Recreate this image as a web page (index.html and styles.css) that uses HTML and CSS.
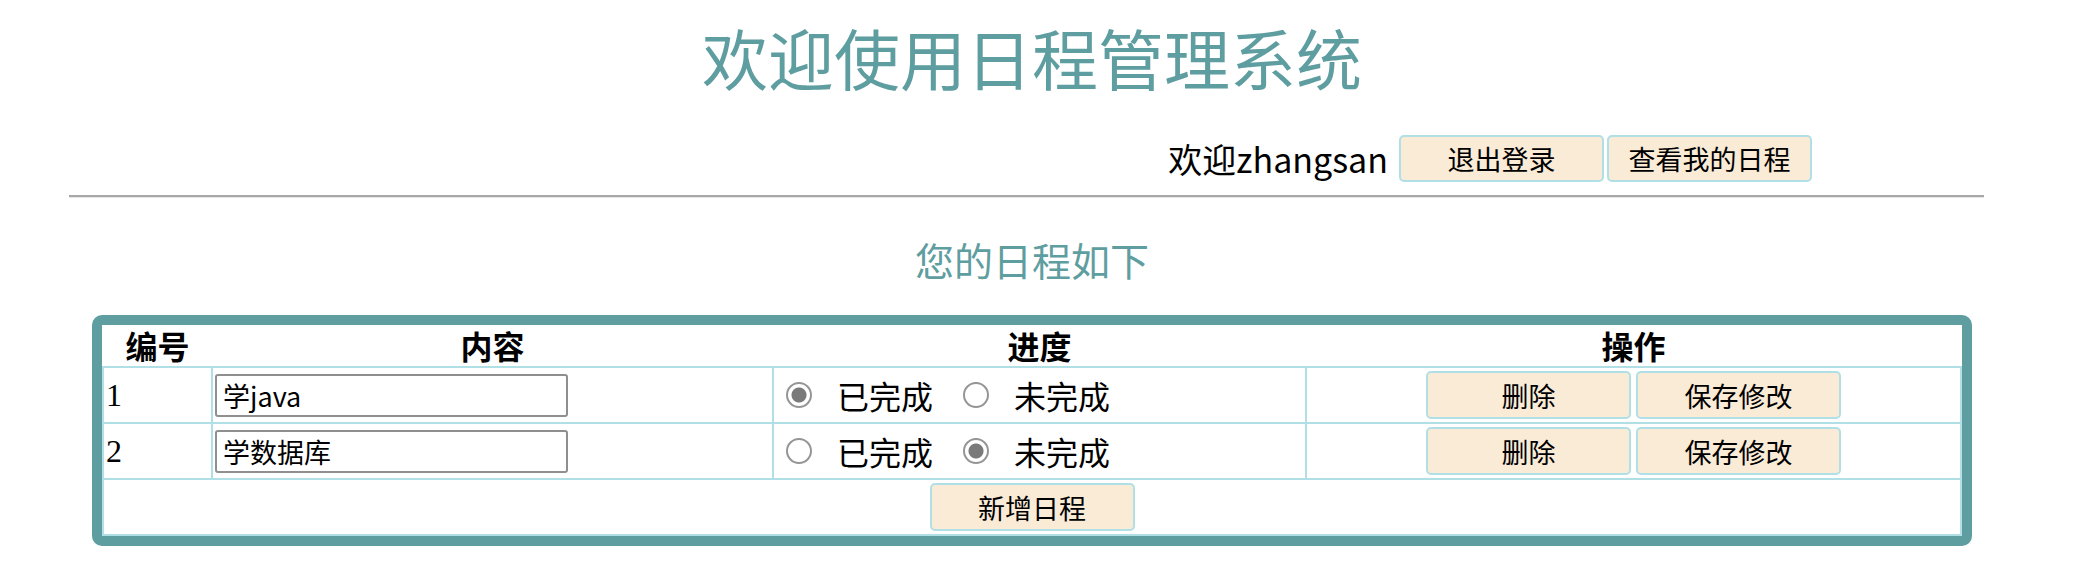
FILE: index.html
```html
<!DOCTYPE html>
<html lang="zh-CN">
<head>
  <meta charset="UTF-8">
  <meta name="viewport" content="width=device-width, initial-scale=1.0">
  <title>日程管理系统</title>
  <link rel="stylesheet" href="styles.css">
</head>
<body>

<h1 class="title">欢迎使用日程管理系统</h1>

<!-- 用户信息 -->
<div class="user-bar">
  <span class="welcome">欢迎zhangsan</span>
  <button class="btn">退出登录</button>
  <button class="btn">查看我的日程</button>
</div>
<hr class="line">

<h3 class="sub-title">您的日程如下</h3>

<!-- 日程列表 -->
<div class="table-box">
  <table class="schedule">
    <colgroup>
      <col class="c-id">
      <col class="c-title">
      <col class="c-state">
      <col>
    </colgroup>
    <tr>
      <th>编号</th>
      <th>内容</th>
      <th>进度</th>
      <th>操作</th>
    </tr>
    <tr>
      <td>1</td>
      <td><input type="text" class="title-input" value="学java"></td>
      <td>
        <div class="state">
          <label><input type="radio" name="s1" checked>已完成</label>
          <label><input type="radio" name="s1">未完成</label>
        </div>
      </td>
      <td>
        <div class="ops">
          <button class="btn">删除</button>
          <button class="btn">保存修改</button>
        </div>
      </td>
    </tr>
    <tr>
      <td>2</td>
      <td><input type="text" class="title-input" value="学数据库"></td>
      <td>
        <div class="state">
          <label><input type="radio" name="s2">已完成</label>
          <label><input type="radio" name="s2" checked>未完成</label>
        </div>
      </td>
      <td>
        <div class="ops">
          <button class="btn">删除</button>
          <button class="btn">保存修改</button>
        </div>
      </td>
    </tr>
    <tr>
      <td colspan="4">
        <div class="ops">
          <button class="btn">新增日程</button>
        </div>
      </td>
    </tr>
  </table>
</div>

</body>
</html>
```

FILE: styles.css
```css
body {
  margin: 8px 18px 8px 8px;
  font-family: "Liberation Serif", "Noto Sans CJK SC", serif;
  font-size: 32px;
  color: #000;
  background: #fff;
}

/* 标题 */
.title {
  margin: 0;
  font-family: "Noto Sans CJK SC", sans-serif;
  font-size: 66px;
  font-weight: normal;
  line-height: 96px;
  text-align: center;
  color: #5f9ea0;
}

.sub-title {
  margin: 38px 0 33px;
  font-family: "Noto Sans CJK SC", sans-serif;
  font-size: 39px;
  font-weight: normal;
  line-height: 46px;
  text-align: center;
  color: #5f9ea0;
}

/* 用户栏 */
.user-bar {
  display: flex;
  justify-content: flex-end;
  align-items: center;
  gap: 3px;
  margin-top: 31px;
  padding-right: 244px;
}
.welcome {
  font-family: "Noto Sans CJK SC", sans-serif;
  font-size: 34px;
  line-height: 40px;
  margin-right: 8px;
}

.line {
  width: 1915px;
  margin: 13px 0 0 61px;
  height: 0;
  border: none;
  border-top: 2px solid #a8a8a8;
  border-bottom: 1px solid #e6e6e6;
}

/* 按钮 */
.btn {
  width: 205px;
  height: 47px;
  padding: 0;
  font-family: "Noto Sans CJK SC", sans-serif;
  font-size: 27px;
  color: #000;
  background: #faebd7;
  border: 2px solid #b0e0e6;
  border-radius: 5px;
}
.ops .btn { height: 48px; }

/* 表格 */
.table-box {
  width: 1880px;
  box-sizing: border-box;
  margin: 0 auto;
  border: 10px solid #5f9ea0;
  border-radius: 10px;
}
.schedule {
  width: 100%;
  border-collapse: collapse;
  table-layout: fixed;
}
.c-id { width: 109px; }
.c-title { width: 561px; }
.c-state { width: 533px; }

.schedule th {
  padding: 0;
  line-height: 41px;
  font-family: "Noto Sans CJK SC", sans-serif;
  font-size: 32px;
  font-weight: bold;
}
.schedule td {
  height: 54px;
  padding: 0 2px;
  border: 2px solid #b0e0e6;
}

.title-input {
  width: 353px;
  height: 43px;
  box-sizing: border-box;
  padding: 0 6px;
  font-family: "Noto Sans CJK SC", sans-serif;
  font-size: 27px;
  border: 2px solid #8f8f8f;
  border-radius: 3px;
}

/* 进度单选 */
.state { display: flex; align-items: center; }
.state label { display: flex; align-items: center; font-family: "Noto Sans CJK SC", sans-serif; }
.state label + label { margin-left: 20px; }
.state input[type="radio"] {
  appearance: none;
  width: 26px;
  height: 26px;
  margin: 0 25px 0 10px;
  border: 2px solid #959595;
  border-radius: 50%;
  background: #fff;
}
.state input[type="radio"]:checked {
  background: radial-gradient(circle, #7a7a7a 0 7px, #fff 8px);
}

.ops { display: flex; justify-content: center; gap: 5px; }
```
